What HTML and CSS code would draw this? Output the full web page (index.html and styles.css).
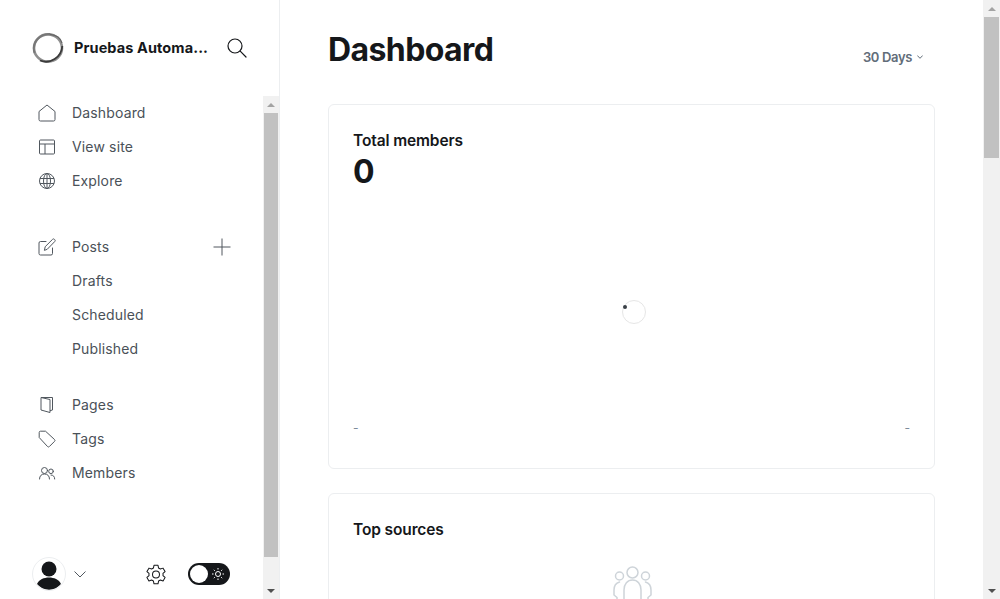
FILE: index.html
```html
<!DOCTYPE html>
<html lang="en">
<head>
<meta charset="utf-8">
<title>Dashboard</title>
<link rel="stylesheet" href="styles.css">
</head>
<body>
<div class="app">
  <aside class="sidebar">
    <header class="brand">
      <svg class="logo" width="32" height="32" viewBox="0 0 32 32" fill="none">
        <ellipse cx="16" cy="16" rx="14" ry="13.600" stroke="#8f8f8f" stroke-width="2.600"/>
        <path d="M2.500 21C-.5 11 7 1.800 18 2" stroke="#777" stroke-width="1.800"/>
        <path d="M8 28.500C18 32.500 29.500 25.500 30.300 14" stroke="#3a3a3a" stroke-width="1.800"/>
        <path d="M18 2.300C25 3 29 7 30 11" stroke="#666" stroke-width="1.200"/>
      </svg>
      <span class="brand-name">Pruebas Automa...</span>
      <svg class="search" width="20" height="20" viewBox="0 0 20 20" fill="none" stroke="#15171a" stroke-width="1.200" stroke-linecap="round">
        <circle cx="8" cy="8" r="7"/>
        <path d="M13.200 13.200L19 19"/>
      </svg>
    </header>
    <div class="side-body">
      <nav class="nav">
        <ul class="group">
          <li class="item"><svg class="ic" width="18" height="18" viewBox="0 0 18 18" fill="none" stroke="#50575e" stroke-width="1" stroke-linejoin="round"><path d="M1 7.500L9 1l8 6.500V15.500a1.500 1.500 0 0 1-1.500 1.500h-13A1.500 1.500 0 0 1 1 15.500z"/></svg><span>Dashboard</span></li>
          <li class="item"><svg class="ic" width="18" height="18" viewBox="0 0 18 18" fill="none" stroke="#50575e" stroke-width="1"><rect x="1.500" y="2" width="15" height="14" rx="1"/><path d="M1.500 6h15M7 6v10"/></svg><span>View site</span></li>
          <li class="item"><svg class="ic" width="18" height="18" viewBox="0 0 18 18" fill="none" stroke="#50575e" stroke-width="1"><circle cx="9" cy="9" r="7.500"/><ellipse cx="9" cy="9" rx="3.500" ry="7.500"/><path d="M2 6.500h14M2 11.500h14M9 1.500v15"/></svg><span>Explore</span></li>
        </ul>
        <ul class="group posts">
          <li class="item"><svg class="ic" width="18" height="18" viewBox="0 0 18 18" fill="none" stroke="#50575e" stroke-width="1" stroke-linejoin="round" stroke-linecap="round"><path d="M8 3.500H2.500A1.500 1.500 0 0 0 1 5v10.500A1.500 1.500 0 0 0 2.500 17H13a1.500 1.500 0 0 0 1.500-1.500V10"/><path d="M6.500 12l.7-3.300L14.500 1.400a1.400 1.400 0 0 1 2 0l.2.200a1.400 1.400 0 0 1 0 2L9.500 11z"/></svg><span>Posts</span>
            <svg class="plus" width="18" height="18" viewBox="0 0 18 18" fill="none" stroke="#50575e" stroke-width="1"><path d="M9 0.500v17M0.500 9h17"/></svg></li>
          <li class="item sub"><span>Drafts</span></li>
          <li class="item sub"><span>Scheduled</span></li>
          <li class="item sub"><span>Published</span></li>
        </ul>
        <ul class="group pages">
          <li class="item"><svg class="ic" width="18" height="18" viewBox="0 0 18 18" fill="none" stroke="#50575e" stroke-width="1" stroke-linejoin="round"><path d="M3 1.500h11.500v12.500l-2.500.7M3 1.500v12.500l9 2.500V3.500z"/></svg><span>Pages</span></li>
          <li class="item"><svg class="ic" width="18" height="18" viewBox="0 0 18 18" fill="none" stroke="#50575e" stroke-width="1" stroke-linejoin="round"><path d="M1.200 2.500A1.300 1.300 0 0 1 2.500 1.200h5L16.500 9.500a1.300 1.300 0 0 1 0 1.900l-5.100 5.100a1.300 1.300 0 0 1-1.900 0L1.200 7.500z"/></svg><span>Tags</span></li>
          <li class="item"><svg class="ic" width="18" height="18" viewBox="0 0 18 18" fill="none" stroke="#50575e" stroke-width="1" stroke-linecap="round"><circle cx="6.500" cy="6.500" r="3"/><path d="M1.500 15c0-3.200 2-5 5-5s5 1.800 5 5"/><circle cx="13" cy="7.300" r="2.300"/><path d="M13 11c2.300 0 3.700 1.500 3.700 4"/></svg><span>Members</span></li>
        </ul>
      </nav>
      <div class="scrollbar side-scroll">
        <span class="arrow up"></span>
        <div class="track"><div class="thumb side-thumb"></div></div>
        <span class="arrow down"></span>
      </div>
      <footer class="side-foot">
        <span class="avatar">
          <svg width="32" height="32" viewBox="0 0 32 32"><circle cx="16" cy="11" r="7.500" fill="#15171a"/><path d="M4 26c2-4.500 7-6.500 12-6.500s10 2 12 6.500c-3 3.500-7 5.700-12 5.700S7 29.500 4 26z" fill="#15171a"/></svg>
        </span>
        <svg class="caret" width="12" height="7" viewBox="0 0 12 7" fill="none" stroke="#50575e" stroke-width="1"><path d="M.5.500L6 6l5.500-5.500"/></svg>
        <svg class="gear" width="22" height="22" viewBox="0 0 24 24" fill="none" stroke="#15171a" stroke-width="1.100" stroke-linejoin="round"><path d="M9.800 2.500h4.400l.6 3 2 1.100 2.900-1 2.200 3.800-2.300 2 .1 1.200-.1 1.200 2.300 2-2.200 3.800-2.900-1-2 1.100-.6 3H9.800l-.6-3-2-1.100-2.900 1L2.100 15.800l2.300-2-.1-1.200.1-1.200-2.300-2 2.200-3.800 2.900 1 2-1.100z"/><circle cx="12" cy="12.500" r="3.800"/></svg>
        <span class="toggle">
          <span class="knob"></span>
          <svg width="14" height="14" viewBox="0 0 14 14" fill="none" stroke="#fff" stroke-width="1"><circle cx="7" cy="7" r="2.500"/><path d="M7 1v1.500M7 11.500V13M1 7h1.500M11.500 7H13M2.800 2.800l1 1M10.200 10.200l1 1M2.800 11.200l1-1M10.200 3.800l1-1"/></svg>
        </span>
      </footer>
    </div>
  </aside>
  <main class="main">
    <div class="content">
      <div class="title-row">
        <h1>Dashboard</h1>
        <div class="range"><span>30 Days</span><svg width="6" height="4" viewBox="0 0 6 4" fill="none" stroke="#626d79" stroke-width="1"><path d="M.3.500L3 3.300 5.700.500"/></svg></div>
      </div>
      <section class="card total">
        <h2>Total members</h2>
        <div class="count">0</div>
        <div class="chart">
          <div class="spinner"><span class="dot"></span></div>
        </div>
        <div class="axis"><span>-</span><span>-</span></div>
      </section>
      <section class="card sources">
        <h2>Top sources</h2>
        <div class="empty">
          <svg width="42" height="42" viewBox="0 0 42 42" fill="none" stroke="#ced4d9" stroke-width="1.500" stroke-linecap="round"><circle cx="20.500" cy="6.500" r="5.500"/><circle cx="7.500" cy="10" r="4"/><circle cx="33.500" cy="10" r="4"/><path d="M12 36V24c0-6 3.500-10 8.500-10S29 18 29 24v12"/><path d="M7.500 16C4 17 2 20 2 24v5l3 2.500V40M33.500 16C37 17 39 20 39 24v5l-3 2.500V40"/></svg>
        </div>
      </section>
    </div>
    <div class="scrollbar page-scroll">
      <span class="arrow up"></span>
      <div class="track"><div class="thumb page-thumb"></div></div>
      <span class="arrow down"></span>
    </div>
  </main>
</div>
</body>
</html>
```
FILE: styles.css
```css
* { box-sizing: border-box; }
html, body { margin: 0; height: 100%; overflow: hidden; }
body { font-family: Inter, "Liberation Sans", sans-serif; color: #15171a; background: #fff; }
ul { list-style: none; margin: 0; padding: 0; }
.app { display: flex; height: 599px; }

.sidebar { width: 280px; flex: none; display: flex; flex-direction: column; border-right: 1px solid #eceef0; }
.brand { height: 96px; flex: none; display: flex; align-items: center; padding: 0 32px 0 32px; }
.logo { flex: none; }
.brand-name { margin-left: 10px; margin-top: -2px; font-size: 14.500px; font-weight: 700; letter-spacing: 0.1px; white-space: nowrap; flex: 1; }
.search { flex: none; }

.side-body { position: relative; flex: 1; display: flex; min-height: 0; }
.nav { flex: 1; min-width: 0; padding-left: 38px; color: #4a5158; font-size: 14px; }
.group.posts { margin-top: 32px; }
.group.pages { margin-top: 22px; }
.item { height: 34px; display: flex; align-items: center; letter-spacing: 0.15px; }
.item > span { position: relative; top: -1px; }
.ic { flex: none; margin-right: 16px; }
.sub { padding-left: 34px; }
.plus { margin-left: auto; margin-right: 32px; }

.scrollbar { flex: none; width: 17px; background: #f1f1f1; display: flex; flex-direction: column; align-items: center; }
.side-scroll { width: 16px; }
.track { flex: 1; width: 100%; min-height: 0; display: flex; flex-direction: column; }
.thumb { background: #c1c1c1; margin: 0 1px; }
.side-thumb { height: 444px; margin-left: 1px; margin-right: 1px; }
.page-thumb { height: 141px; }
.arrow { flex: none; height: 17px; width: 100%; display: flex; align-items: center; justify-content: center; }
.arrow::before { content: ""; border-left: 4px solid transparent; border-right: 4px solid transparent; }
.arrow.up::before { border-bottom: 4px solid #a3a3a3; }
.arrow.down::before { border-top: 4px solid #505050; }

.side-foot { position: absolute; left: 32px; right: 49px; bottom: 8px; height: 34px; display: flex; align-items: center; }
.avatar { width: 34px; height: 34px; flex: none; border-radius: 50%; border: 1px solid #eceef0; overflow: hidden; display: block; }
.avatar svg { display: block; }
.caret { margin-left: 8px; flex: none; }
.gear { margin-left: auto; flex: none; margin-right: 21px; }
.toggle { width: 42px; height: 22px; flex: none; background: #15171a; border-radius: 11px; display: flex; align-items: center; justify-content: space-between; padding: 0 5px 0 2px; }
.knob { width: 18px; height: 18px; background: #fff; border-radius: 50%; }

.main { flex: 1; min-width: 0; display: flex; }
.content { flex: 1; min-width: 0; overflow: hidden; padding: 0 48px; }
.title-row { height: 104px; display: flex; justify-content: space-between; align-items: flex-start; padding-top: 30px; }
h1 { margin: 0; font-size: 32px; line-height: 40px; font-weight: 700; letter-spacing: -0.6px; }
.range { margin-top: 18px; display: flex; align-items: center; gap: 5px; padding-right: 12px; color: #626d79; font-size: 13px; font-weight: 600; letter-spacing: -0.35px; line-height: 18px; }

.card { border: 1px solid #eceef0; border-radius: 6px; padding: 24px; }
.total { height: 365px; display: flex; flex-direction: column; }
.sources { margin-top: 24px; height: 200px; }
h2 { margin: 1px 0 0; font-size: 15.500px; line-height: 22px; font-weight: 600; letter-spacing: -0.12px; }
.count { font-size: 32px; line-height: 40px; font-weight: 700; }
.chart { flex: 1; display: flex; align-items: center; justify-content: center; padding-top: 10px; padding-left: 4px; }
.spinner { position: relative; width: 24px; height: 24px; border: 1px solid #e6e6e6; border-radius: 50%; }
.dot { position: absolute; left: 0; top: 4px; width: 4px; height: 4px; background: #394047; border-radius: 50%; }
.axis { display: flex; justify-content: space-between; color: #7c8b9a; font-size: 12px; line-height: 14px; margin-bottom: 9px; }
.empty { display: flex; justify-content: center; margin-top: 14px; margin-left: 2px; padding-top: 11px; }
```
